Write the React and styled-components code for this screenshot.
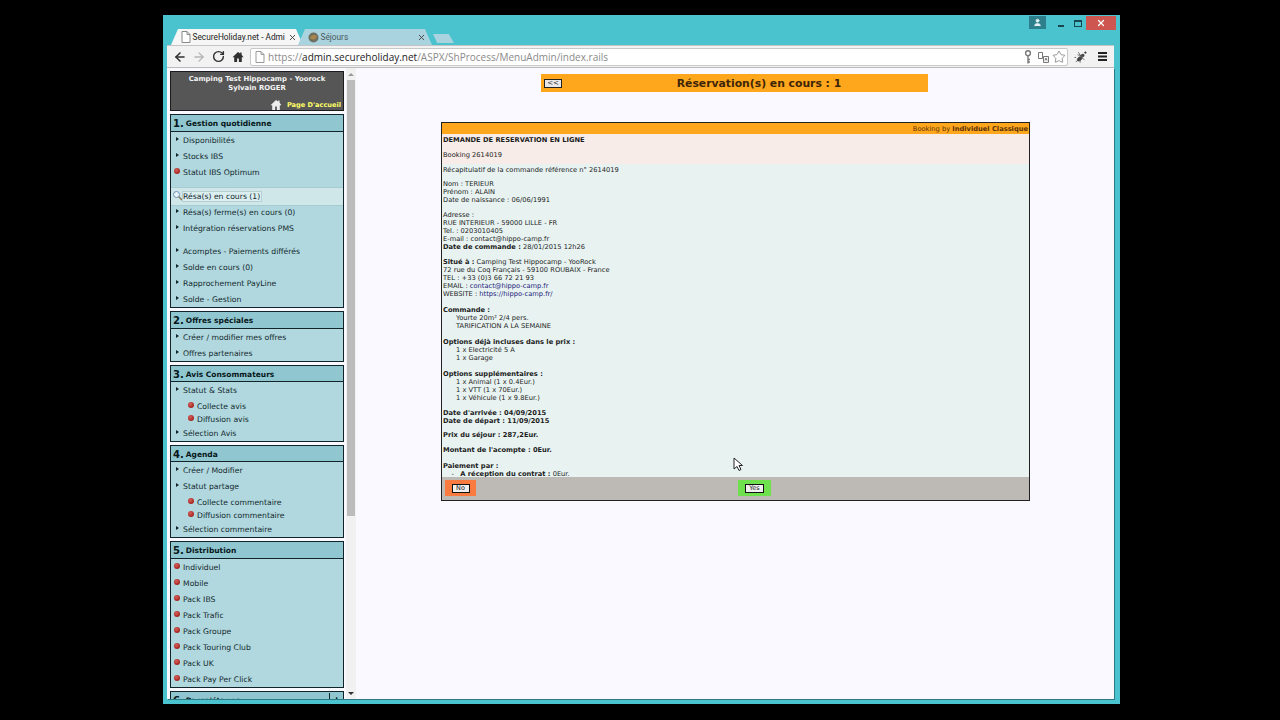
import React from 'react';
import styled, { createGlobalStyle } from 'styled-components';
import { ArrowLeft, ArrowRight, RotateCw, Star, X, User } from 'lucide-react';

const Global = createGlobalStyle`
  html, body { margin: 0; padding: 0; background: #000; height: 720px; overflow: hidden; }
  * { box-sizing: border-box; }
  svg { flex: none; }
`;

const Screen = styled.div`
  width: 1280px;
  height: 720px;
  padding: 15px 160px 16px 163px;
  background: #000;
`;

const Win = styled.div`
  position: relative;
  height: 689px;
  background: #4bc3cf;
  display: flex;
  flex-direction: column;
  overflow: hidden;
`;

/* title bar */
const TitleBar = styled.div`
  height: 30px;
  flex: none;
  display: flex;
  justify-content: space-between;
  align-items: flex-start;
`;

const TabStrip = styled.div`
  display: flex;
  align-items: flex-end;
  height: 30px;
  padding-left: 8px;
`;

const Tab = styled.div`
  width: ${p => p.$width}px;
  height: 16px;
  margin-right: -5px;
  padding: 0 6px 0 10px;
  display: flex;
  align-items: center;
  gap: 1.5px;
  background: ${p => (p.$active ? '#f6f6f6' : '#a9d3de')};
  clip-path: polygon(0 100%, 7px 0, calc(100% - 7px) 0, 100% 100%);
  font: 8.3px Roboto, sans-serif;
  color: ${p => (p.$active ? '#222' : '#4a5a60')};
  white-space: nowrap;
`;

const TabLabel = styled.span`
  flex: 1;
`;

const NewTab = styled.div`
  width: 21px;
  height: 9px;
  margin: 0 0 2px 6px;
  background: #a9d3de;
  clip-path: polygon(0 0, 75% 0, 100% 100%, 20% 100%);
`;

const WinControls = styled.div`
  display: flex;
  align-items: flex-start;
  padding-right: 4px;
`;

const ProfileBtn = styled.div`
  width: 17px;
  height: 13px;
  margin: 1px 6px 0 0;
  background: #2d7f8c;
  display: flex;
  align-items: center;
  justify-content: center;
  color: #e4f2f4;
`;

const CtrlBtn = styled.div`
  width: 17px;
  height: 10px;
  margin-top: 2px;
  display: flex;
  align-items: flex-end;
  justify-content: center;
`;

const MinGlyph = styled.span`
  width: 6px;
  height: 2px;
  background: #17484f;
`;

const MaxGlyph = styled.span`
  width: 8px;
  height: 7px;
  border: 1px solid #17484f;
  border-top-width: 2px;
`;

const CloseBtn = styled.div`
  width: 30px;
  height: 14px;
  margin: 1px 0 0 0;
  background: #cd5650;
  display: flex;
  align-items: center;
  justify-content: center;
  color: #fff;
`;

/* toolbar */
const Toolbar = styled.div`
  height: 23px;
  flex: none;
  margin: 0 6px 0 4px;
  background: #f2f2f2;
  border-top: 1px solid #c4c4c4;
  border-bottom: 1px solid #b9b9b9;
  display: flex;
  align-items: center;
  padding-left: 3px;
  color: #333;
`;

const NavBtn = styled.div`
  width: 19.5px;
  height: 20px;
  flex: none;
  display: flex;
  align-items: center;
  justify-content: center;
  color: ${p => (p.$dim ? '#b5b5b5' : '#303030')};
`;

const UrlBox = styled.div`
  width: 818px;
  height: 18px;
  flex: none;
  margin-left: 2px;
  background: #fff;
  border: 1px solid #c8c8c8;
  border-radius: 2px;
  display: flex;
  align-items: center;
  padding: 0 1px 0 4px;
  font: 10px 'Open Sans', sans-serif;
  color: #8a8a8a;
  white-space: nowrap;
`;

const UrlText = styled.span`
  flex: 1;
  margin-left: 3px;
`;

const UrlHost = styled.span`
  color: #222;
`;

const UrlIcons = styled.div`
  display: flex;
  align-items: center;
  gap: 3px;
  color: #777;
`;

const KeyWrap = styled.span`
  display: flex;
  margin-right: 3px;
`;

const ToolRight = styled.div`
  flex: 1;
  display: flex;
  align-items: center;
  gap: 10px;
  padding-left: 6px;
`;

/* page */
const Content = styled.div`
  flex: 1;
  min-height: 0;
  margin: 0 6px 5px 4px;
  display: flex;
  background: #f9f9ff;
  box-shadow: 1px 1px 0 #2e7a85;
  font-family: 'DejaVu Sans', Verdana, sans-serif;
`;

const Sidebar = styled.div`
  width: 179px;
  flex: none;
  padding: 3px 2px 0 3px;
  display: flex;
  flex-direction: column;
  gap: 3px;
  overflow: hidden;
  background: #f9f9ff;
`;

const UserCard = styled.div`
  height: 40px;
  flex: none;
  background: #565656;
  border: 1px solid #1c1c1c;
  color: #f4f4f4;
  font-size: 6.9px;
  font-weight: bold;
  text-align: center;
  line-height: 9px;
  padding-top: 3px;
`;

const HomeLink = styled.div`
  margin-top: 6px;
  padding-right: 2px;
  display: flex;
  justify-content: flex-end;
  align-items: center;
  gap: 5px;
  font-size: 6.6px;
  color: #ffff66;
`;

const Section = styled.div`
  flex: none;
  background: #b0d8de;
  border: 1px solid #10242a;
`;

const SectionHead = styled.div`
  height: ${p => (p.$tall ? 17 : 16)}px;
  padding: ${p => (p.$tall ? 0 : 1)}px 0 0 2px;
  background: #90c6cf;
  border-bottom: 1px solid #10242a;
  display: flex;
  align-items: center;
  gap: 2px;
  font-size: 7.5px;
  font-weight: bold;
  color: #06161a;
`;

const SectionNum = styled.span`
  font-size: 10px;
`;

const HeadLabel = styled.span`
  flex: 1;
`;

const PlusCell = styled.span`
  width: 14px;
  height: 100%;
  border-left: 1px solid #10242a;
  display: flex;
  align-items: center;
  justify-content: center;
  font-size: 11px;
`;

const Item = styled.div`
  height: ${p => (p.$sub ? 13 : 16)}px;
  margin-top: ${p => p.$top || 0}px;
  padding-left: ${p => (p.$sub ? 14 : 0)}px;
  display: flex;
  align-items: center;
  font-size: 7.7px;
  color: #14282e;
  white-space: nowrap;
`;

const ActiveItem = styled(Item)`
  height: 17px;
  margin-bottom: -1px;
  background: #cfe7e9;
  box-shadow: 0 -1px 0 #a6ccd2, 0 1px 0 #a6ccd2;
`;

const ActiveLabel = styled.span`
  background: #dbeef0;
  outline: 1px solid #b5cfd4;
  padding-right: 1px;
`;

const Marker = styled.span`
  width: 12px;
  height: 12px;
  flex: none;
  display: flex;
  align-items: center;
  justify-content: center;
  margin-top: -3px;
`;

const Arrow = styled.span`
  width: 0;
  height: 0;
  border-left: 3px solid #10242a;
  border-top: 2.5px solid transparent;
  border-bottom: 2.5px solid transparent;
`;

const Dot = styled.span`
  width: 6px;
  height: 6px;
  border-radius: 50%;
  background: radial-gradient(circle at 40% 35%, #d8605a, #a32420 70%);
`;

const ScrollTrack = styled.div`
  width: 10px;
  flex: none;
  background: #f1f1f1;
  display: flex;
  flex-direction: column;
  align-items: center;
`;

const ScrollUp = styled.span`
  margin-top: 5px;
  width: 0;
  height: 0;
  border-left: 3px solid transparent;
  border-right: 3px solid transparent;
  border-bottom: 3px solid #9a9a9a;
`;

const ScrollThumb = styled.div`
  width: 8px;
  height: 436px;
  margin-top: 4px;
  background: #bcbcbc;
`;

const ScrollDown = styled.span`
  margin-top: auto;
  margin-bottom: 4px;
  width: 0;
  height: 0;
  border-left: 3px solid transparent;
  border-right: 3px solid transparent;
  border-top: 3px solid #333;
`;

const Main = styled.div`
  flex: 1;
  padding: 6px 1px 0 0;
  display: flex;
  flex-direction: column;
  align-items: center;
`;

const Banner = styled.div`
  width: 387px;
  height: 18px;
  flex: none;
  margin-bottom: 30px;
  background: #fea61c;
  padding-left: 3px;
  display: flex;
  align-items: center;
`;

const BackBtn = styled.div`
  width: 18px;
  height: 9px;
  flex: none;
  background: #e8e8e8;
  border: 1px solid #222;
  font-size: 7px;
  line-height: 6px;
  text-align: center;
  color: #333;
`;

const BannerTitle = styled.div`
  flex: 1;
  padding-left: 28px;
  text-align: center;
  font-size: 10.8px;
  font-weight: bold;
  color: #3e2508;
`;

const Card = styled.div`
  width: 589px;
  height: 379px;
  flex: none;
  margin-left: 2px;
  border: 1px solid #222;
  display: flex;
  flex-direction: column;
  font-size: 6.7px;
  line-height: 8px;
  color: #1c1c1c;
`;

const CardHead = styled.div`
  height: 11px;
  flex: none;
  background: #fea61c;
  padding-right: 1px;
  text-align: right;
  line-height: 12px;
  color: #5a3206;
`;

const PinkBlock = styled.div`
  height: 30px;
  flex: none;
  background: #f7ece7;
  padding: 2px 1px 0;
`;

const GreenBlock = styled.div`
  flex: 1;
  min-height: 0;
  background: #e8f3f1;
  padding: 2px 1px 0;
`;

const Para = styled.div`
  margin-bottom: ${p => (p.$after === undefined ? 7 : p.$after)}px;
`;

const Line = styled.div`
  padding-left: ${p => (p.$indent ? 13 : 0)}px;
  white-space: nowrap;
`;

const Link = styled.span`
  color: #22227a;
`;

const Footer = styled.div`
  height: 23px;
  flex: none;
  background: #bdb9b5;
  padding: 3px 0 0 3px;
  display: flex;
  align-items: flex-start;
`;

const ActionCell = styled.div`
  height: 16px;
  width: ${p => p.$width}px;
  margin-left: ${p => p.$left || 0}px;
  background: ${p => p.$color};
  display: flex;
  align-items: center;
  justify-content: center;
`;

const ActionBtn = styled.div`
  width: ${p => p.$width}px;
  height: 9px;
  background: #f0f0f0;
  border: 1px solid #111;
  font-size: 6.5px;
  line-height: 7px;
  text-align: center;
  color: #222;
`;

const Cursor = styled.svg`
  position: absolute;
  left: 570px;
  top: 442px;
`;

const DocIcon = ({ color = '#888' }) => (
  <svg width="10" height="12" viewBox="0 0 10 12" fill="#fff" stroke={color} strokeWidth="1">
    <path d="M1 .5h5l3 3v8H1z" />
    <path d="M6 .5v3h3" fill="none" />
  </svg>
);

const Favicon = () => (
  <svg width="11" height="11" viewBox="0 0 11 11">
    <circle cx="5.5" cy="5.5" r="5" fill="#6f6f62" />
    <path d="M2 6c1-3 4-4 7-2-1 3-3 5-7 2z" fill="#a8854a" />
  </svg>
);

const HomeIcon = ({ color = '#303030', size = 12 }) => (
  <svg width={size} height={size} viewBox="0 0 12 12" fill={color}>
    <path d="M6 1 .5 6.2h1.7V11h2.9V7.6h1.8V11h2.9V6.2h1.7L9.6 3.7V1.6H8.2v.8z" />
  </svg>
);

const KeyIcon = () => (
  <svg width="8" height="14" viewBox="0 0 8 14" fill="none" stroke="#777" strokeWidth="1.4">
    <circle cx="4" cy="3.2" r="2.4" />
    <path d="M4 5.5v8M4 9.5h2M4 12h2" />
  </svg>
);

const Translate = () => (
  <svg width="11" height="12" viewBox="0 0 11 12" fill="none" stroke="#777" strokeWidth="1">
    <path d="M.5 1.5h4v6h-4z" />
    <path d="M5.5 5.5h5v6h-5z" fill="#f6f6f6" />
    <path d="M7 9.5l1-2.5 1 2.5" />
  </svg>
);

const Bee = () => (
  <svg width="14" height="14" viewBox="0 0 16 15" fill="#444" stroke="#444" strokeWidth=".8">
    <ellipse cx="6.5" cy="9.5" rx="3.2" ry="2" transform="rotate(-40 6.5 9.5)" />
    <circle cx="10" cy="5.8" r="1.6" />
    <path d="M8 7 5 2M9 6 4 5M5 11l-3 2M7 11l0 3M9 8l3 3M2.5 8l-2 0" fill="none" />
    <path d="M13 1v3M11.5 2.5h3" stroke="#222" />
  </svg>
);

const MenuIcon = () => (
  <svg width="9" height="9" viewBox="0 0 9 9" fill="#222">
    <rect y="0" width="9" height="2" />
    <rect y="3.5" width="9" height="2" />
    <rect y="7" width="9" height="2" />
  </svg>
);

const Lens = () => (
  <svg width="11" height="11" viewBox="0 0 11 11" fill="none">
    <circle cx="4.5" cy="4.5" r="3" fill="#eaf4fb" stroke="#6f8fb5" />
    <path d="M6.8 6.8 10 10" stroke="#8a7a5a" strokeWidth="1.6" />
  </svg>
);

const MenuEntry = ({ dot, sub, top, children }) => (
  <Item $sub={sub} $top={top}>
    <Marker>{dot ? <Dot /> : <Arrow />}</Marker>
    {children}
  </Item>
);

const App = () => {
  return (
    <Screen>
      <Global />
      <Win>
        <TitleBar>
          <TabStrip>
            <Tab $active $width={132}>
              <DocIcon />
              <TabLabel>SecureHoliday.net - Admi</TabLabel>
              <X size={9} strokeWidth={2.5} color="#444" />
            </Tab>
            <Tab $width={134}>
              <Favicon />
              <TabLabel>Séjours</TabLabel>
              <X size={9} strokeWidth={2.5} color="#444" />
            </Tab>
            <NewTab />
          </TabStrip>
          <WinControls>
            <ProfileBtn><User size={9} fill="currentColor" strokeWidth={2} /></ProfileBtn>
            <CtrlBtn><MinGlyph /></CtrlBtn>
            <CtrlBtn><MaxGlyph /></CtrlBtn>
            <CloseBtn><X size={10} strokeWidth={3} /></CloseBtn>
          </WinControls>
        </TitleBar>

        <Toolbar>
          <NavBtn><ArrowLeft size={14} strokeWidth={2.6} /></NavBtn>
          <NavBtn $dim><ArrowRight size={14} strokeWidth={2.2} /></NavBtn>
          <NavBtn><RotateCw size={13} strokeWidth={2.6} /></NavBtn>
          <NavBtn><HomeIcon /></NavBtn>
          <UrlBox>
            <DocIcon color="#999" />
            <UrlText>https://<UrlHost>admin.secureholiday.net</UrlHost>/ASPX/ShProcess/MenuAdmin/index.rails</UrlText>
            <UrlIcons>
              <KeyWrap><KeyIcon /></KeyWrap>
              <Translate />
              <Star size={14} strokeWidth={1.3} />
            </UrlIcons>
          </UrlBox>
          <ToolRight>
            <Bee />
            <MenuIcon />
          </ToolRight>
        </Toolbar>

        <Content>
          <Sidebar>
            <UserCard>
              <div>Camping Test Hippocamp - Yoorock</div>
              <div>Sylvain ROGER</div>
              <HomeLink><HomeIcon color="#eeeeee" size={12} />Page D'accueil</HomeLink>
            </UserCard>

            <Section>
              <SectionHead $tall><SectionNum>1.</SectionNum><HeadLabel>Gestion quotidienne</HeadLabel></SectionHead>
              <MenuEntry>Disponibilités</MenuEntry>
              <MenuEntry>Stocks IBS</MenuEntry>
              <MenuEntry dot>Statut IBS Optimum</MenuEntry>
              <ActiveItem $top={8}><Marker><Lens /></Marker><ActiveLabel>Résa(s) en cours (1)</ActiveLabel></ActiveItem>
              <MenuEntry>Résa(s) ferme(s) en cours (0)</MenuEntry>
              <MenuEntry>Intégration réservations PMS</MenuEntry>
              <MenuEntry top={7}>Acomptes - Paiements différés</MenuEntry>
              <MenuEntry>Solde en cours (0)</MenuEntry>
              <MenuEntry>Rapprochement PayLine</MenuEntry>
              <MenuEntry>Solde - Gestion</MenuEntry>
            </Section>

            <Section>
              <SectionHead $tall><SectionNum>2.</SectionNum><HeadLabel>Offres spéciales</HeadLabel></SectionHead>
              <MenuEntry>Créer / modifier mes offres</MenuEntry>
              <MenuEntry>Offres partenaires</MenuEntry>
            </Section>

            <Section>
              <SectionHead><SectionNum>3.</SectionNum><HeadLabel>Avis Consommateurs</HeadLabel></SectionHead>
              <MenuEntry>Statut &amp; Stats</MenuEntry>
              <MenuEntry dot sub top={2}>Collecte avis</MenuEntry>
              <MenuEntry dot sub>Diffusion avis</MenuEntry>
              <MenuEntry top={-1}>Sélection Avis</MenuEntry>
            </Section>

            <Section>
              <SectionHead><SectionNum>4.</SectionNum><HeadLabel>Agenda</HeadLabel></SectionHead>
              <MenuEntry>Créer / Modifier</MenuEntry>
              <MenuEntry>Statut partage</MenuEntry>
              <MenuEntry dot sub top={2}>Collecte commentaire</MenuEntry>
              <MenuEntry dot sub>Diffusion commentaire</MenuEntry>
              <MenuEntry top={-1}>Sélection commentaire</MenuEntry>
            </Section>

            <Section>
              <SectionHead $tall><SectionNum>5.</SectionNum><HeadLabel>Distribution</HeadLabel></SectionHead>
              <MenuEntry dot>Individuel</MenuEntry>
              <MenuEntry dot>Mobile</MenuEntry>
              <MenuEntry dot>Pack IBS</MenuEntry>
              <MenuEntry dot>Pack Trafic</MenuEntry>
              <MenuEntry dot>Pack Groupe</MenuEntry>
              <MenuEntry dot>Pack Touring Club</MenuEntry>
              <MenuEntry dot>Pack UK</MenuEntry>
              <MenuEntry dot>Pack Pay Per Click</MenuEntry>
            </Section>

            <Section>
              <SectionHead><SectionNum>6.</SectionNum><HeadLabel>Parcs/étapes</HeadLabel><PlusCell>+</PlusCell></SectionHead>
            </Section>
          </Sidebar>

          <ScrollTrack>
            <ScrollUp />
            <ScrollThumb />
            <ScrollDown />
          </ScrollTrack>

          <Main>
            <Banner>
              <BackBtn>&lt;&lt;</BackBtn>
              <BannerTitle>Réservation(s) en cours : 1</BannerTitle>
            </Banner>

            <Card>
              <CardHead>Booking by <b>Individuel Classique</b></CardHead>
              <PinkBlock>
                <Para><b>DEMANDE DE RESERVATION EN LIGNE</b></Para>
                <Para>Booking 2614019</Para>
              </PinkBlock>
              <GreenBlock>
                <Para $after={6}>Récapitulatif de la commande référence n° 2614019</Para>
                <Para>
                  <Line>Nom : TERIEUR</Line>
                  <Line>Prénom : ALAIN</Line>
                  <Line>Date de naissance : 06/06/1991</Line>
                </Para>
                <Para>
                  <Line>Adresse :</Line>
                  <Line>RUE INTERIEUR - 59000 LILLE - FR</Line>
                  <Line>Tel. : 0203010405</Line>
                  <Line>E-mail : contact@hippo-camp.fr</Line>
                  <Line><b>Date de commande :</b> 28/01/2015 12h26</Line>
                </Para>
                <Para $after={8}>
                  <Line><b>Situé à :</b> Camping Test Hippocamp - YooRock</Line>
                  <Line>72 rue du Coq Français - 59100 ROUBAIX - France</Line>
                  <Line>TEL : +33 (0)3 66 72 21 93</Line>
                  <Line>EMAIL : <Link>contact@hippo-camp.fr</Link></Line>
                  <Line>WEBSITE : <Link>https://hippo-camp.fr/</Link></Line>
                </Para>
                <Para $after={8}>
                  <Line><b>Commande :</b></Line>
                  <Line $indent>Yourte 20m² 2/4 pers.</Line>
                  <Line $indent>TARIFICATION A LA SEMAINE</Line>
                </Para>
                <Para $after={8}>
                  <Line><b>Options déjà incluses dans le prix :</b></Line>
                  <Line $indent>1 x Electricité 5 A</Line>
                  <Line $indent>1 x Garage</Line>
                </Para>
                <Para>
                  <Line><b>Options supplémentaires :</b></Line>
                  <Line $indent>1 x Animal (1 x 0.4Eur.)</Line>
                  <Line $indent>1 x VTT (1 x 70Eur.)</Line>
                  <Line $indent>1 x Véhicule (1 x 9.8Eur.)</Line>
                </Para>
                <Para $after={6}>
                  <Line><b>Date d'arrivée : 04/09/2015</b></Line>
                  <Line><b>Date de départ : 11/09/2015</b></Line>
                </Para>
                <Para><b>Prix du séjour : 287,2Eur.</b></Para>
                <Para $after={8}><b>Montant de l'acompte : 0Eur.</b></Para>
                <Para $after={0}>
                  <Line><b>Paiement par :</b></Line>
                  <Line>&nbsp;&nbsp;&nbsp;&nbsp;- &nbsp;&nbsp;<b>A réception du contrat :</b> 0Eur.</Line>
                </Para>
              </GreenBlock>
              <Footer>
                <ActionCell $width={31} $color="#f97b3f"><ActionBtn $width={18}>No</ActionBtn></ActionCell>
                <ActionCell $width={33} $left={262} $color="#6fe04e"><ActionBtn $width={19}>Yes</ActionBtn></ActionCell>
              </Footer>
            </Card>
          </Main>
        </Content>

        <Cursor width="11" height="15" viewBox="0 0 11 15">
          <path d="M1 1v11l3-2.5 2 4 2-1-2-4h3.5z" fill="#fff" stroke="#222" strokeWidth="1" />
        </Cursor>
      </Win>
    </Screen>
  );
};

export default App;
